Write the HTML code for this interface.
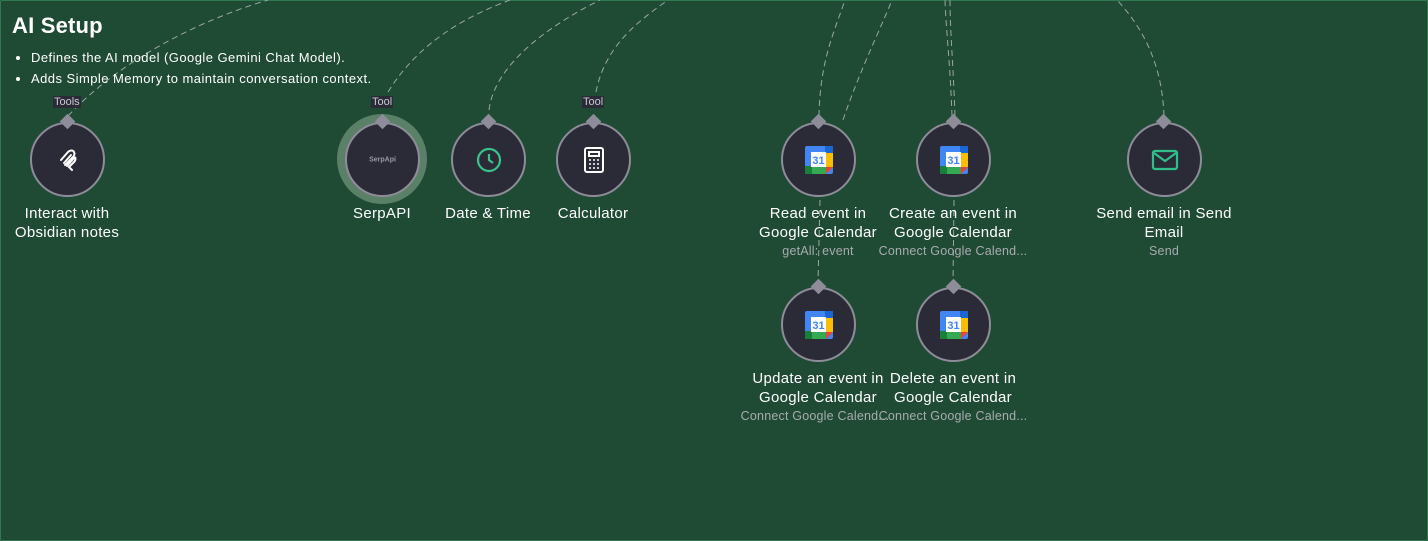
<!DOCTYPE html>
<html><head><meta charset="utf-8"><style>
body{margin:0;width:1428px;height:541px;overflow:hidden;background:#1f4b35;font-family:"Liberation Sans",sans-serif;}
.frame{position:absolute;left:0;top:0;width:1426px;height:539px;border:1px solid #2f7a50;border-radius:2px;background:#1f4b35;}
h1{position:absolute;left:12px;top:13px;margin:0;font-size:22px;font-weight:bold;color:#fff;letter-spacing:0.2px;}
ul{position:absolute;left:13px;top:47px;margin:0;padding-left:18px;color:#fff;font-size:13px;line-height:21px;letter-spacing:0.45px;}
.n{position:absolute;width:71px;height:71px;border-radius:50%;background:#2b2b38;border:2px solid #8f8c99;}
.d{position:absolute;width:11px;height:11px;background:#8f8c99;transform:rotate(45deg);}
.l{position:absolute;width:180px;text-align:center;color:#fff;font-size:15px;line-height:19px;letter-spacing:0.3px;}
.s{position:absolute;width:180px;text-align:center;color:#a9aab0;font-size:12.5px;white-space:nowrap;letter-spacing:0.2px;}
.t{position:absolute;font-size:11px;color:#c8c8d0;background:#2b2b38;padding:0 1px;line-height:12px;}
.ic{position:absolute;left:50%;top:50%;transform:translate(-50%,-50%);}
</style></head><body>
<div class="frame"></div>
<svg width="1428" height="541" style="position:absolute;left:0;top:0">
<g fill="none" stroke="#9aa6a0" stroke-width="1" stroke-dasharray="6,4">
<path d="M68 116 C120 60 200 20 268 0"/>
<path d="M388 92 C420 40 470 15 510 0"/>
<path d="M489 110 C495 60 560 20 600 0"/>
<path d="M596 92 C605 45 640 20 668 0"/>
<path d="M819 116 C820 60 835 30 845 0"/>
<path d="M843 120 C860 70 880 30 892 0"/>
<path d="M952 116 C950 60 946 30 945 0"/>
<path d="M955 116 C953 60 950 30 950 0"/>
<path d="M1164 116 C1162 60 1140 25 1117 0"/>
<path d="M820 200 L818 282"/>
<path d="M954 200 L953 282"/>
</g></svg>
<h1>AI Setup</h1>
<ul><li>Defines the AI model (Google Gemini Chat Model).</li><li>Adds Simple Memory to maintain conversation context.</li></ul>

<div style="position:absolute;left:337px;top:114px;width:90px;height:90px;border-radius:50%;background:#5b8068"></div>

<div class="n" style="left:30px;top:122px"><svg class="ic" width="26" height="26" viewBox="0 0 26 26" fill="none" stroke="#fff" stroke-width="2" stroke-linecap="round"><path d="M6 13 L13 5 C15 3 18 3 19 5 C20 7 19 9 18 10 L10 18 M9 16 L16 8 M12 19 L19 11 C21 9 21 13 19 15 L14 20 L17 23"/></svg></div>
<div class="n" style="left:345px;top:122px"><div class="ic" style="color:#9a9aa6;font-size:7px;font-weight:bold">SerpApi</div></div>
<div class="n" style="left:451px;top:122px"><svg class="ic" width="28" height="28" viewBox="0 0 28 28" fill="none" stroke="#35c48a" stroke-width="2.2"><circle cx="14" cy="14" r="11"/><path d="M14 8 V14 L18 17"/></svg></div>
<div class="n" style="left:556px;top:122px"><svg class="ic" width="22" height="26" viewBox="0 0 22 26" fill="none" stroke="#fff" stroke-width="2"><rect x="2" y="1" width="18" height="24" rx="2"/><rect x="6" y="5" width="10" height="4"/><g fill="#fff" stroke="none"><circle cx="7" cy="13" r="1"/><circle cx="11" cy="13" r="1"/><circle cx="15" cy="13" r="1"/><circle cx="7" cy="17" r="1"/><circle cx="11" cy="17" r="1"/><circle cx="15" cy="17" r="1"/><circle cx="7" cy="21" r="1"/><circle cx="11" cy="21" r="1"/><circle cx="15" cy="21" r="1"/></g></svg></div>
<div class="n" style="left:1127px;top:122px"><svg class="ic" width="28" height="22" viewBox="0 0 28 22" fill="none" stroke="#2fbf8a" stroke-width="2.2"><rect x="2" y="2" width="24" height="18" rx="2"/><path d="M3 4 L14 12 L25 4"/></svg></div>

<div class="n" style="left:781px;top:122px"><svg class="ic" width="28" height="28" viewBox="0 0 28 28"><rect x="0" y="0" width="28" height="28" rx="2" fill="#4285f4"/><rect x="20" y="0" width="8" height="8" fill="#1967d2"/><rect x="20" y="7" width="8" height="14" fill="#fbbc04"/><rect x="0" y="20" width="21" height="8" fill="#34a853"/><rect x="0" y="20" width="7" height="8" fill="#188038"/><path d="M21 21 L28 21 L21 28Z" fill="#ea4335"/><rect x="6" y="6" width="15" height="15" fill="#fff"/><text x="13.5" y="18" font-size="11" fill="#4285f4" text-anchor="middle" font-family="Liberation Sans" font-weight="bold">31</text></svg></div>
<div class="n" style="left:916px;top:122px"><svg class="ic" width="28" height="28" viewBox="0 0 28 28"><rect x="0" y="0" width="28" height="28" rx="2" fill="#4285f4"/><rect x="20" y="0" width="8" height="8" fill="#1967d2"/><rect x="20" y="7" width="8" height="14" fill="#fbbc04"/><rect x="0" y="20" width="21" height="8" fill="#34a853"/><rect x="0" y="20" width="7" height="8" fill="#188038"/><path d="M21 21 L28 21 L21 28Z" fill="#ea4335"/><rect x="6" y="6" width="15" height="15" fill="#fff"/><text x="13.5" y="18" font-size="11" fill="#4285f4" text-anchor="middle" font-family="Liberation Sans" font-weight="bold">31</text></svg></div>
<div class="n" style="left:781px;top:287px"><svg class="ic" width="28" height="28" viewBox="0 0 28 28"><rect x="0" y="0" width="28" height="28" rx="2" fill="#4285f4"/><rect x="20" y="0" width="8" height="8" fill="#1967d2"/><rect x="20" y="7" width="8" height="14" fill="#fbbc04"/><rect x="0" y="20" width="21" height="8" fill="#34a853"/><rect x="0" y="20" width="7" height="8" fill="#188038"/><path d="M21 21 L28 21 L21 28Z" fill="#ea4335"/><rect x="6" y="6" width="15" height="15" fill="#fff"/><text x="13.5" y="18" font-size="11" fill="#4285f4" text-anchor="middle" font-family="Liberation Sans" font-weight="bold">31</text></svg></div>
<div class="n" style="left:916px;top:287px"><svg class="ic" width="28" height="28" viewBox="0 0 28 28"><rect x="0" y="0" width="28" height="28" rx="2" fill="#4285f4"/><rect x="20" y="0" width="8" height="8" fill="#1967d2"/><rect x="20" y="7" width="8" height="14" fill="#fbbc04"/><rect x="0" y="20" width="21" height="8" fill="#34a853"/><rect x="0" y="20" width="7" height="8" fill="#188038"/><path d="M21 21 L28 21 L21 28Z" fill="#ea4335"/><rect x="6" y="6" width="15" height="15" fill="#fff"/><text x="13.5" y="18" font-size="11" fill="#4285f4" text-anchor="middle" font-family="Liberation Sans" font-weight="bold">31</text></svg></div>

<div class="d" style="left:62px;top:116px"></div>
<div class="d" style="left:377px;top:116px"></div>
<div class="d" style="left:483px;top:116px"></div>
<div class="d" style="left:588px;top:116px"></div>
<div class="d" style="left:813px;top:116px"></div>
<div class="d" style="left:948px;top:116px"></div>
<div class="d" style="left:1158px;top:116px"></div>
<div class="d" style="left:813px;top:281px"></div>
<div class="d" style="left:948px;top:281px"></div>

<div class="t" style="left:53px;top:96px">Tools</div>
<div class="t" style="left:371px;top:96px">Tool</div>
<div class="t" style="left:582px;top:96px">Tool</div>

<div class="l" style="left:-23px;top:204px">Interact with<br>Obsidian notes</div>
<div class="l" style="left:292px;top:204px">SerpAPI</div>
<div class="l" style="left:398px;top:204px">Date &amp; Time</div>
<div class="l" style="left:503px;top:204px">Calculator</div>
<div class="l" style="left:728px;top:204px">Read event in<br>Google Calendar</div>
<div class="s" style="left:728px;top:244px">getAll: event</div>
<div class="l" style="left:863px;top:204px">Create an event in<br>Google Calendar</div>
<div class="s" style="left:863px;top:244px">Connect Google Calend...</div>
<div class="l" style="left:1074px;top:204px">Send email in Send<br>Email</div>
<div class="s" style="left:1074px;top:244px">Send</div>
<div class="l" style="left:728px;top:369px">Update an event in<br>Google Calendar</div>
<div class="s" style="left:725px;top:409px">Connect Google Calend...</div>
<div class="l" style="left:863px;top:369px">Delete an event in<br>Google Calendar</div>
<div class="s" style="left:863px;top:409px">Connect Google Calend...</div>
</body></html>
